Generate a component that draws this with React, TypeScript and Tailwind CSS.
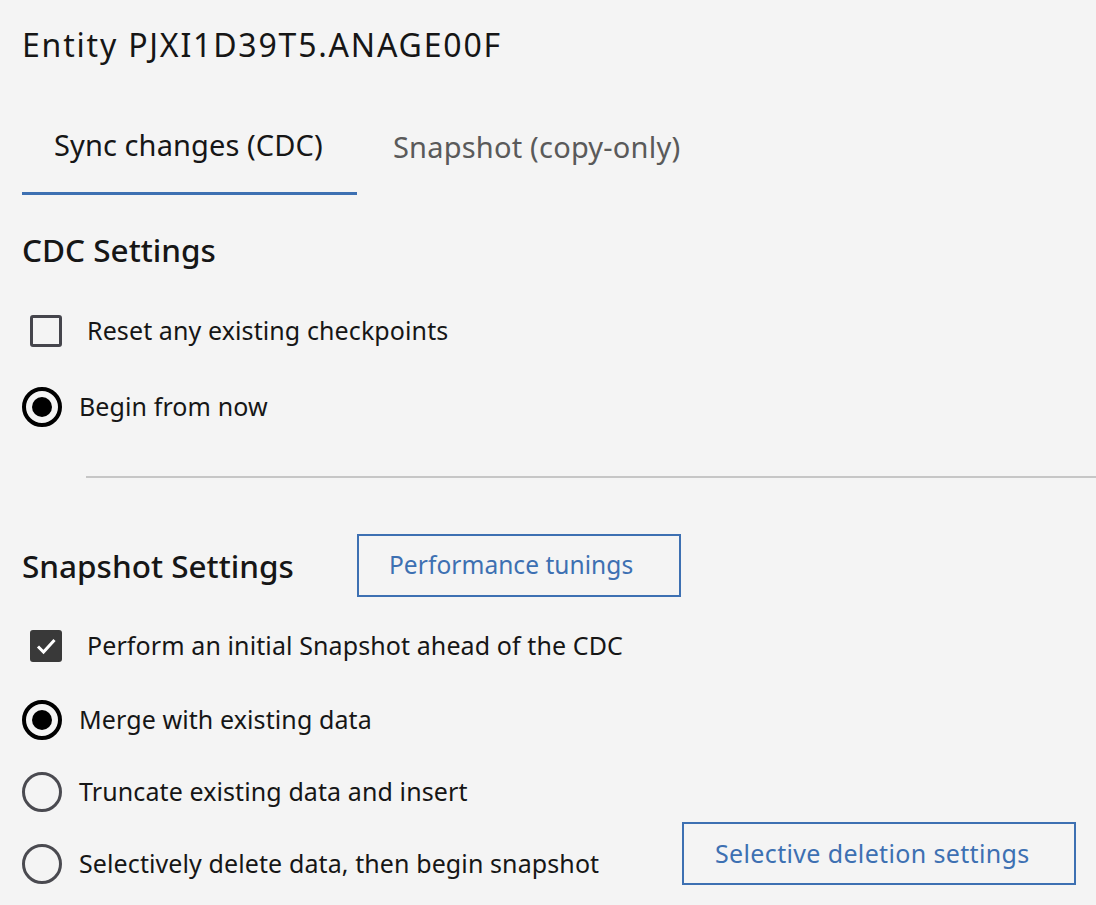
import React from "react";

const font = { fontFamily: '"Noto Sans", "Open Sans", sans-serif' };

function Radio({ checked, label }: { checked?: boolean; label: string }) {
  return (
    <div className="flex h-[40px] items-center">
      {checked ? (
        <span className="flex h-[40px] w-[40px] items-center justify-center rounded-full border-[4px] border-black">
          <span className="h-[20px] w-[20px] rounded-full bg-black" />
        </span>
      ) : (
        <span className="h-[40px] w-[40px] rounded-full border-[3px] border-[#4a4a50]" />
      )}
      <span className="ml-[17px] text-[25px] tracking-[0.1px] text-[#161616]">{label}</span>
    </div>
  );
}

function Checkbox({ checked, label }: { checked?: boolean; label: string }) {
  return (
    <div className="flex h-[40px] items-center pl-[8px]">
      {checked ? (
        <span className="flex h-[32px] w-[32px] items-center justify-center rounded-[3px] bg-[#393939]">
          <svg width="32" height="32" viewBox="0 0 32 32" fill="none">
            <path d="M8 16.5l5.5 5.5L24.5 10" stroke="#fff" strokeWidth="3" />
          </svg>
        </span>
      ) : (
        <span className="h-[32px] w-[32px] rounded-[3px] border-[3px] border-[#45454c]" />
      )}
      <span className="ml-[25px] text-[25px] tracking-[0.1px] text-[#161616]">{label}</span>
    </div>
  );
}

export default function App() {
  return (
    <div className="min-h-screen overflow-hidden bg-[#f4f4f4] pl-[22px]" style={font}>
      {/* Titre */}
      <h1 className="mt-[25px] text-[32px] leading-[40px] tracking-[1.8px] text-[#161616]">Entity PJXI1D39T5.ANAGE00F</h1>

      {/* Onglets */}
      <div className="mt-[33px] flex">
        <button className="flex h-[97px] w-[335px] items-center border-b-[3px] border-[#3d70b2] pl-[32px] text-[29px] tracking-[0.1px] text-[#161616]">
          Sync changes (CDC)
        </button>
        <button className="flex h-[97px] items-center pl-[36px] text-[29px] tracking-[0.2px] text-[#5a5a5a]">
          Snapshot (copy-only)
        </button>
      </div>

      {/* CDC */}
      <h2 className="mt-[35px] text-[31.5px] font-medium leading-[40px] text-[#161616]">CDC Settings</h2>
      <div className="mt-[41px]">
        <Checkbox label="Reset any existing checkpoints" />
      </div>
      <div className="mt-[36px]">
        <Radio checked label="Begin from now" />
      </div>

      <div className="ml-[64px] mt-[49px] h-[2px] bg-[#c6c6c6]" />

      {/* Snapshot */}
      <div className="mt-[56px] flex h-[63px] items-center">
        <h2 className="w-[335px] text-[31.5px] font-medium text-[#161616]">Snapshot Settings</h2>
        <button className="flex h-[63px] w-[324px] items-center border-2 border-[#3d70b2] pl-[30px] text-[24.5px] tracking-[0.05px] text-[#3d70b2]">
          Performance tunings
        </button>
      </div>
      <div className="mt-[29px]">
        <Checkbox checked label="Perform an initial Snapshot ahead of the CDC" />
      </div>
      <div className="mt-[34px]">
        <Radio checked label="Merge with existing data" />
      </div>
      <div className="mt-[32px]">
        <Radio label="Truncate existing data and insert" />
      </div>
      <div className="mt-[10px] flex items-end">
        <div className="w-[660px]">
          <Radio label="Selectively delete data, then begin snapshot" />
        </div>
        <button className="mb-[-1px] flex h-[63px] w-[394px] items-center border-2 border-[#3d70b2] pl-[31px] text-[25px] tracking-[0.35px] text-[#3d70b2]">
          Selective deletion settings
        </button>
      </div>
    </div>
  );
}
